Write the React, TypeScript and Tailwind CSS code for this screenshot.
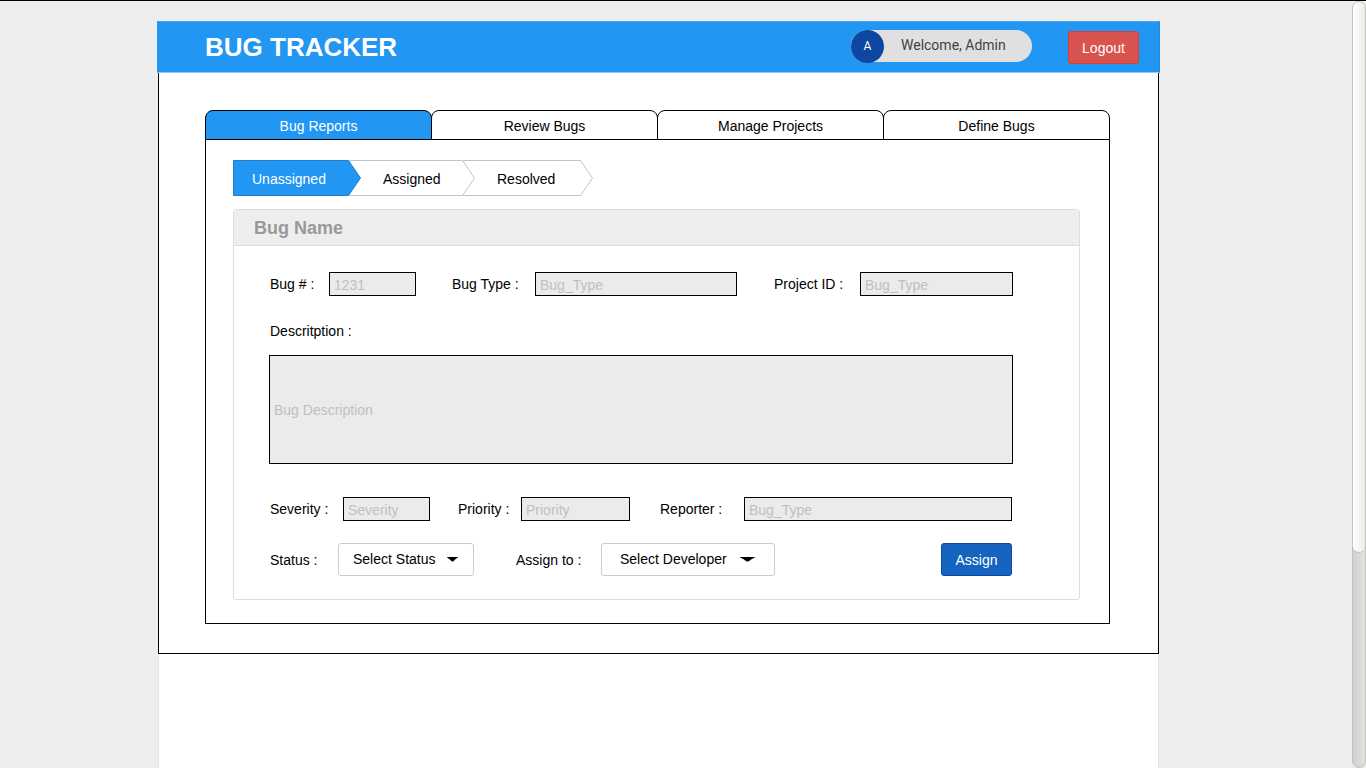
import { useState } from "react";
import type { ReactNode } from "react";

const TABS = ["Bug Reports", "Review Bugs", "Manage Projects", "Define Bugs"];

const STEPS = [
  { name: "Unassigned", width: 128, box: "z-30 w-[128px] pl-[19px]" },
  { name: "Assigned", width: 126, box: "z-20 -ml-3 w-[126px] pl-[34px]" },
  { name: "Resolved", width: 130, box: "z-10 -ml-3 w-[130px] pl-[34px]" },
];

function StepShape({ width, active }: { width: number; active: boolean }) {
  const right = width - 0.5;
  return (
    <svg
      aria-hidden="true"
      className="absolute inset-0 -z-10 h-full w-full"
      viewBox={`0 0 ${width} 36`}
    >
      <path
        d={`M0.5 0.5H${right - 12}L${right} 18L${right - 12} 35.5H0.5Z`}
        fill={active ? "#2196f3" : "#ffffff"}
        stroke={active ? "#1c7fce" : "#c4c4c4"}
      />
    </svg>
  );
}

const fieldStyle =
  "rounded-none border border-black bg-[#ebebeb] px-1 text-sm placeholder:text-[#c0c0c0] placeholder:opacity-100";

function Field({
  id,
  label,
  placeholder,
  labelWidth,
  inputWidth,
}: {
  id: string;
  label: string;
  placeholder: string;
  labelWidth: string;
  inputWidth: string;
}) {
  return (
    <>
      <label htmlFor={id} className={`shrink-0 pl-px ${labelWidth}`}>
        {label}
      </label>
      <input
        id={id}
        type="text"
        placeholder={placeholder}
        className={`h-6 pt-0.5 ${fieldStyle} ${inputWidth}`}
      />
    </>
  );
}

function Dropdown({
  id,
  width,
  padding,
  caret,
  children,
}: {
  id: string;
  width: string;
  padding: string;
  caret: string;
  children: ReactNode;
}) {
  return (
    <div className={`relative shrink-0 ${width}`}>
      <select
        id={id}
        className={`block h-[33px] w-full appearance-none rounded-[3px] border border-[#cccccc] bg-white pb-0.5 text-sm text-black ${padding}`}
      >
        {children}
      </select>
      <svg
        aria-hidden="true"
        viewBox="0 0 12 5"
        preserveAspectRatio="none"
        className={`pointer-events-none absolute top-[14px] h-[5px] ${caret}`}
      >
        <path d="M0 0H12L11.6 0.8Q9.6 1.4 7 4.2Q6 4.8 5 4.2Q2.4 1.4 0.4 0.8Z" fill="#000" />
      </svg>
    </div>
  );
}

export default function App() {
  const [tab, setTab] = useState(TABS[0]);
  const [step, setStep] = useState(STEPS[0].name);

  return (
    <div className="flex min-h-screen border-t border-black bg-[#eeeeee] font-['Liberation_Sans',Arial,sans-serif] text-sm text-black">
      <main className="mr-48 ml-[157px] flex min-w-0 flex-1 flex-col pt-5">
        <header className="flex h-[52px] items-center border border-t-[#4da3e8] border-r-[#1e88e5] border-b-[#90caf9] border-l-[#2196f3] bg-[#2196f3] pr-5 pl-[47px]">
          <h1 className="text-[26px] leading-8 font-bold text-white">BUG TRACKER</h1>
          <div className="mb-0.5 ml-auto flex h-8 w-[181px] items-center rounded-full bg-[#e0e0e0] font-[Roboto,sans-serif]">
            <span className="flex h-[33px] w-[33px] items-center justify-center rounded-full bg-[#0d47a1] text-xs text-white">
              A
            </span>
            <span className="ml-[17px] pb-0.5 text-sm text-[#424242]">Welcome, Admin</span>
          </div>
          <button
            type="button"
            className="ml-9 h-[33px] w-[71px] rounded-[3px] border border-[#d43f3a] bg-[#d9534f] pt-0.5 text-sm text-white"
          >
            Logout
          </button>
        </header>

        <section className="mx-px border-x border-b border-black bg-white pt-[37px] pr-12 pb-[29px] pl-[46px]">
          <nav className="flex">
            {TABS.map((name) => (
              <button
                key={name}
                type="button"
                onClick={() => setTab(name)}
                className={`-mr-px h-[30px] flex-1 rounded-t-lg border border-black pt-0.5 text-sm last:mr-0 ${
                  tab === name ? "bg-[#2196f3] text-white" : "bg-white"
                }`}
              >
                {name}
              </button>
            ))}
          </nav>

          <div className="border-x border-b border-black pt-5 pr-[29px] pb-[23px] pl-[27px]">
            <div className="isolate flex">
              {STEPS.map(({ name, width, box }) => (
                <button
                  key={name}
                  type="button"
                  onClick={() => setStep(name)}
                  className={`relative h-9 pt-0.5 text-left text-sm ${box} ${
                    step === name ? "text-white" : "text-black"
                  }`}
                >
                  <StepShape width={width} active={step === name} />
                  {name}
                </button>
              ))}
            </div>

            <form
              className="mt-[13px] rounded-[3px] border border-[#dddddd]"
              onSubmit={(event) => event.preventDefault()}
            >
              <h2 className="flex h-9 items-center border-b border-[#dddddd] bg-[#eeeeee] pl-5 text-lg font-bold text-[#999999]">
                Bug Name
              </h2>

              <div className="pt-[26px] pr-[66px] pb-[23px] pl-[35px]">
                <div className="flex items-center">
                  <Field
                    id="bug-number"
                    label="Bug # :"
                    placeholder="1231"
                    labelWidth="w-[60px]"
                    inputWidth="w-[87px]"
                  />
                  <Field
                    id="bug-type"
                    label="Bug Type :"
                    placeholder="Bug_Type"
                    labelWidth="ml-[35px] w-[84px]"
                    inputWidth="min-w-0 flex-1"
                  />
                  <Field
                    id="project-id"
                    label="Project ID :"
                    placeholder="Bug_Type"
                    labelWidth="ml-9 w-[87px]"
                    inputWidth="w-[153px]"
                  />
                </div>

                <label htmlFor="description" className="mt-[25px] block pl-px">
                  Descritption :
                </label>
                <textarea
                  id="description"
                  placeholder="Bug Description"
                  className={`mt-[14px] block h-[109px] w-full resize-none pt-11 ${fieldStyle}`}
                />

                <div className="mt-[33px] flex items-center pr-px">
                  <Field
                    id="severity"
                    label="Severity :"
                    placeholder="Severity"
                    labelWidth="w-[74px]"
                    inputWidth="w-[87px]"
                  />
                  <Field
                    id="priority"
                    label="Priority :"
                    placeholder="Priority"
                    labelWidth="ml-[27px] w-16"
                    inputWidth="w-[109px]"
                  />
                  <Field
                    id="reporter"
                    label="Reporter :"
                    placeholder="Bug_Type"
                    labelWidth="ml-[29px] w-[85px]"
                    inputWidth="min-w-0 flex-1"
                  />
                </div>

                <div className="mt-[22px] flex items-center pr-px">
                  <label htmlFor="status" className="w-[69px] shrink-0 pl-px">
                    Status :
                  </label>
                  <Dropdown id="status" width="w-[136px]" padding="pl-[14px]" caret="right-4 w-[11px]">
                    <option>Select Status</option>
                  </Dropdown>
                  <label htmlFor="developer" className="ml-[42px] w-[85px] shrink-0">
                    Assign to :
                  </label>
                  <Dropdown id="developer" width="w-[174px]" padding="pl-[18px]" caret="right-5 w-[15px]">
                    <option>Select Developer</option>
                  </Dropdown>
                  <button
                    type="submit"
                    className="ml-auto h-[33px] w-[71px] rounded-[3px] border border-[#0d47a1] bg-[#1565c0] text-sm text-white"
                  >
                    Assign
                  </button>
                </div>
              </div>
            </form>
          </div>
        </section>

        <div className="mx-px flex-1 border-x border-[#e4e4e4] bg-white" />
      </main>

      <div
        aria-hidden="true"
        className="flex w-[14px] flex-col rounded-full border border-[#c5c2be] bg-linear-to-r from-[#d0d0d0] to-[#e2e2e2]"
      >
        <div className="h-[72%] rounded-full border-b border-[#c5c2be] bg-linear-to-r from-white to-[#ececea]" />
      </div>
    </div>
  );
}
